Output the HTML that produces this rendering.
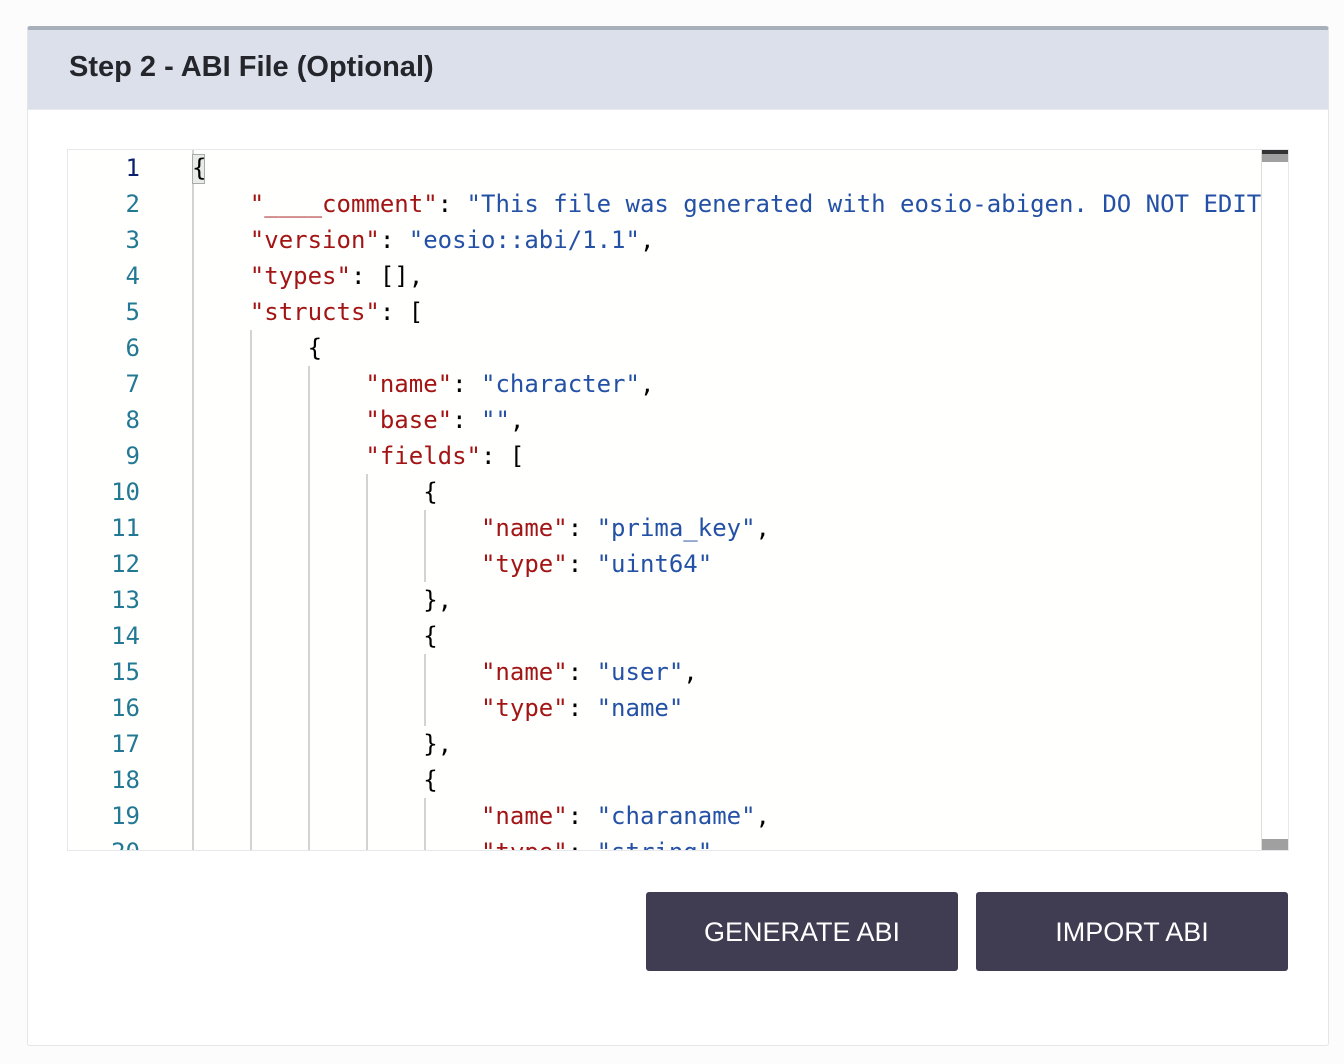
<!DOCTYPE html>
<html><head><style>
body{margin:0;background:#fcfcfc;width:1344px;height:1064px;overflow:hidden;position:relative;font-family:"Liberation Sans",sans-serif}
.card{position:absolute;left:27px;top:26px;width:1302px;height:1020px;background:#fff;border:1px solid #e3e5e8;border-top:4px solid #a7afbb;border-radius:3px;box-sizing:border-box}
.hdr{position:absolute;left:0;top:0;right:0;height:79px;background:#dbe0ea;border-bottom:1px solid #e6e9ef}
.hdr span{position:absolute;left:41px;top:21px;font-size:29px;font-weight:bold;color:#24262b}
.ed{position:absolute;left:67px;top:149px;width:1222px;height:702px;border:1px solid #e6e8ee;box-sizing:border-box;background:#fffffe;overflow:hidden}
.ln{position:absolute;left:0;width:72px;text-align:right;font:24px/36px "DejaVu Sans Mono",monospace;color:#237893}
.code{position:absolute;left:124px;top:0;font:24px/36px "DejaVu Sans Mono",monospace;white-space:pre;color:#000;margin:0}
.k{color:#a31515}.s{color:#2451a5}
.g{position:absolute;width:2px;background:#d3d3d3}
.sb{position:absolute;left:1193px;top:0;width:28px;height:702px;border-left:1px solid #ddd;background:#fff}
.btn{position:absolute;top:892px;width:312px;height:79px;background:#403d52;color:#fff;font-size:27px;text-align:center;line-height:80px;border-radius:3px}
</style></head><body>
<div class="card"><div class="hdr"><span>Step 2 - ABI File (Optional)</span></div></div>
<div class="ed">
<div class="ln" style="top:0;color:#0b216f">1</div>
<div class="ln" style="top:36px">2</div><div class="ln" style="top:72px">3</div><div class="ln" style="top:108px">4</div><div class="ln" style="top:144px">5</div><div class="ln" style="top:180px">6</div><div class="ln" style="top:216px">7</div><div class="ln" style="top:252px">8</div><div class="ln" style="top:288px">9</div><div class="ln" style="top:324px">10</div><div class="ln" style="top:360px">11</div><div class="ln" style="top:396px">12</div><div class="ln" style="top:432px">13</div><div class="ln" style="top:468px">14</div><div class="ln" style="top:504px">15</div><div class="ln" style="top:540px">16</div><div class="ln" style="top:576px">17</div><div class="ln" style="top:612px">18</div><div class="ln" style="top:648px">19</div><div class="ln" style="top:684px">20</div>
<div class="g" style="left:124px;top:0;height:702px"></div>
<div class="g" style="left:182px;top:180px;height:522px"></div>
<div class="g" style="left:240px;top:216px;height:486px"></div>
<div class="g" style="left:298px;top:324px;height:378px"></div>
<div class="g" style="left:356px;top:360px;height:72px"></div>
<div class="g" style="left:356px;top:504px;height:72px"></div>
<div class="g" style="left:356px;top:648px;height:54px"></div>
<div style="position:absolute;left:124px;top:4px;width:13px;height:30px;background:#e8ebe6;border:1px solid #aaa;box-sizing:border-box"></div>
<pre class="code">{
    <span class="k">"____comment"</span>: <span class="s">"This file was generated with eosio-abigen. DO NOT EDIT "</span>
    <span class="k">"version"</span>: <span class="s">"eosio::abi/1.1"</span>,
    <span class="k">"types"</span>: [],
    <span class="k">"structs"</span>: [
        {
            <span class="k">"name"</span>: <span class="s">"character"</span>,
            <span class="k">"base"</span>: <span class="s">""</span>,
            <span class="k">"fields"</span>: [
                {
                    <span class="k">"name"</span>: <span class="s">"prima_key"</span>,
                    <span class="k">"type"</span>: <span class="s">"uint64"</span>
                },
                {
                    <span class="k">"name"</span>: <span class="s">"user"</span>,
                    <span class="k">"type"</span>: <span class="s">"name"</span>
                },
                {
                    <span class="k">"name"</span>: <span class="s">"charaname"</span>,
                    <span class="k">"type"</span>: <span class="s">"string"</span>,</pre>
<div class="sb"><div style="position:absolute;left:0;top:0;width:28px;height:4px;background:#333"></div><div style="position:absolute;left:0;top:4px;width:28px;height:8px;background:#a0a0a0"></div><div style="position:absolute;left:0;top:689px;width:28px;height:13px;background:#a0a0a0"></div></div>
</div>
<div class="btn" style="left:646px">GENERATE ABI</div>
<div class="btn" style="left:976px">IMPORT ABI</div>
</body></html>
